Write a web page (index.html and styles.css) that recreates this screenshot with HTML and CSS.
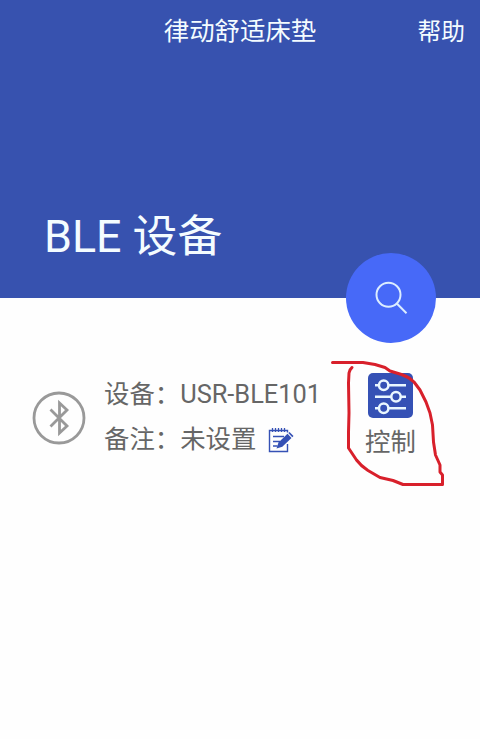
FILE: index.html
```html
<!DOCTYPE html>
<html lang="zh-CN">
<head>
<meta charset="utf-8">
<title>律动舒适床垫</title>
<link rel="stylesheet" href="styles.css">
</head>
<body>
<main class="screen">
  <header class="hero">
    <nav class="bar">
      <span class="bar-title">律动舒适床垫</span>
      <a class="bar-help">帮助</a>
    </nav>
    <h1 class="heading">BLE 设备</h1>
    <button class="search" aria-label="搜索">
      <svg width="90" height="90" viewBox="0 0 90 90" fill="none" stroke="#dcedff" stroke-width="2">
        <circle cx="42.500" cy="41.800" r="12"/>
        <path d="M50.800 50.500 60.500 60.300"/>
      </svg>
    </button>
  </header>
  <section class="device">
    <svg class="bluetooth" width="54" height="54" viewBox="0 0 54 54" fill="none" stroke="#999">
      <circle cx="27" cy="27" r="25" stroke-width="2.800"/>
      <path d="M18.500 18.500 35 35 27.500 42V12L35 19 18.500 35.500" stroke-width="2.800"/>
    </svg>
    <div class="info">
      <div class="line"><span class="label">设备：</span><span class="name">USR-BLE101</span></div>
      <div class="line"><span class="label">备注：</span><span class="label">未设置</span>
        <svg class="edit" width="26" height="26" viewBox="0 0 26 26" fill="none" stroke="#3551b5" stroke-width="1.400">
          <path d="M19.500 5.500V3.500H1.500V24.500H19.500V17"/>
          <path d="M4.500 1V5M7.500 1V5M10.500 1V5M13.500 1V5M16.500 1V5" stroke-width="1.300"/>
          <path d="M5 9.500H16M5 14.500H12M5 19H9.500"/>
          <path d="M8.500 21.500 10.500 15.500 19.500 6.800 23.500 10.900 14.300 19.800Z" fill="#3551b5" stroke="none"/>
          <path d="M20.300 6.100 21.500 5 25.500 9 24.300 10.200Z" fill="#3551b5" stroke="none"/>
        </svg>
      </div>
    </div>
    <div class="control">
      <svg width="45" height="45" viewBox="0 0 45 45">
        <rect width="45" height="45" rx="5" fill="#3551b5"/>
        <g fill="#3551b5" stroke="#eaf7ff" stroke-width="2.500">
          <path d="M7 12.300H38M7 23.800H38M7 35.200H38"/>
          <circle cx="15.700" cy="12.300" r="4.700"/>
          <circle cx="28" cy="23.800" r="4.700"/>
          <circle cx="15.700" cy="35.200" r="4.700"/>
        </g>
      </svg>
      <span class="control-text">控制</span>
    </div>
  </section>
  <svg class="markup" width="480" height="739" viewBox="0 0 480 739" fill="none" stroke="#d8202b" stroke-width="3" stroke-linecap="round" stroke-linejoin="round">
    <path d="M332.500 362.500H363L375 364.500 385 367.500 390 371 401.500 374.500Q409 377 414 382L420 390 426 402 430 413 432.500 425 433.500 442 435.500 455 440 465V472L442.500 475V484.500H403L393 480.500 380 477.500 368 470.500Q361 466 356.500 460L348.500 448V432L349 413 348.500 383 349 373Q350 369 352 367.500"/>
  </svg>
</main>
</body>
</html>
```

FILE: styles.css
```css
* { box-sizing: border-box; }

body {
  margin: 0;
  background: #fefefe;
  font-family: Roboto, "Noto Sans CJK SC", sans-serif;
  color: #666;
}

.screen {
  position: relative;
  height: 739px;
  overflow: hidden;
}

.hero {
  position: relative;
  height: 298px;
  background: #3752af;
  color: #f4fcff;
}

.bar {
  display: grid;
  grid-template-columns: 1fr auto 1fr;
  align-items: center;
  height: 59px;
  padding: 0 15px;
}

.bar-title {
  grid-column: 2;
  padding-bottom: 2px;
  font-size: 25.4px;
}

.bar-help {
  justify-self: end;
  font-size: 23.7px;
}

.heading {
  margin: 148px 0 0 44px;
  font-size: 44.8px;
  font-weight: 400;
  line-height: 60px;
  white-space: nowrap;
}

.search {
  position: absolute;
  left: 345.5px;
  top: 253px;
  width: 90px;
  height: 90px;
  padding: 0;
  border: 0;
  border-radius: 50%;
  background: #4769f8;
}

.search svg { display: block; }

.device {
  display: flex;
  align-items: flex-start;
  padding: 73px 0 0 32px;
  font-size: 25.4px;
}

.bluetooth {
  flex: none;
  margin-top: 20px;
}

.info {
  flex: none;
  width: 279px;
  padding-left: 18px;
}

.line {
  display: flex;
  align-items: center;
  height: 45px;
  white-space: nowrap;
}

.label { padding-bottom: 3px; }

.name { padding-top: 1px; }

.edit { margin: 2px 0 0 12px; }

.control {
  display: flex;
  flex: none;
  flex-direction: column;
  align-items: center;
  width: 51px;
  margin-top: 2px;
}

.control-text {
  margin-top: 5px;
  line-height: 38px;
  white-space: nowrap;
}

.markup {
  position: absolute;
  left: 0;
  top: 0;
  pointer-events: none;
}
```
